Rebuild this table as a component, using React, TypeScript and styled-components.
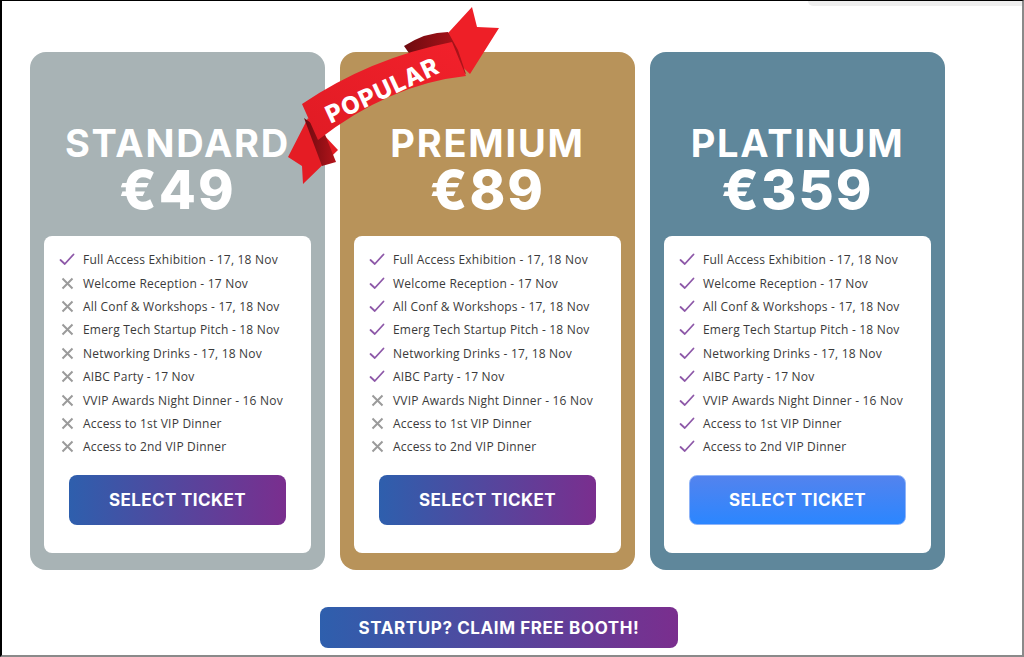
import styled, { createGlobalStyle } from "styled-components";

const GlobalStyle = createGlobalStyle`
  html, body {
    margin: 0;
    padding: 0;
    background: #ffffff;
  }
  * {
    box-sizing: border-box;
  }
`;

const Frame = styled.div`
  position: relative;
  width: 1024px;
  height: 657px;
  overflow: hidden;
  border-top: 1px solid #000;
  border-left: 2px solid #000;
  border-right: 2px solid #8a8a8a;
  border-bottom: 2px solid #8a8a8a;
  background: #fff;
  font-family: "Inter", "Liberation Sans", sans-serif;
`;

const TopBar = styled.div`
  position: absolute;
  top: 0;
  right: 0;
  width: 214px;
  height: 5px;
  background: #eeeeee;
  border-bottom-left-radius: 5px;
`;

const Page = styled.div`
  width: 996px;
  display: flex;
  flex-direction: column;
  align-items: center;
  padding-top: 51px;
`;

const CardsRow = styled.div`
  display: flex;
  gap: 15px;
  align-self: flex-start;
  padding-left: 28px;
`;

const Card = styled.div<{ $bg: string }>`
  position: relative;
  width: 295px;
  height: 518px;
  border-radius: 16px;
  background: ${(p) => p.$bg};
  padding: 70px 14px 17px;
  display: flex;
  flex-direction: column;
  align-items: center;
`;

const Title = styled.h2`
  margin: 0;
  color: #fff;
  font-size: 38px;
  line-height: 42px;
  font-weight: 700;
  letter-spacing: 1.8px;
`;

const Price = styled.div`
  color: #fff;
  font-size: 54px;
  line-height: 46px;
  font-weight: 800;
  letter-spacing: 2px;
  margin-top: 3px;
`;

const Features = styled.div`
  margin-top: 23px;
  width: 100%;
  flex: 1;
  background: #fff;
  border-radius: 8px;
  padding: 12px 0 28px 15px;
  display: flex;
  flex-direction: column;
`;

const FeatureList = styled.ul`
  list-style: none;
  margin: 0;
  padding: 0;
`;

const Feature = styled.li`
  height: 23.4px;
  display: flex;
  align-items: center;
  gap: 8px;
  font-family: "Open Sans", "Liberation Sans", sans-serif;
  font-size: 12px;
  letter-spacing: 0.2px;
  color: #3a3a3a;
`;

const IconBox = styled.span`
  width: 16px;
  display: flex;
  justify-content: center;
`;

const TicketButton = styled.button<{ $variant?: "blue" }>`
  margin: 16px 0 0 10px;
  width: 217px;
  height: 50px;
  border-radius: 8px;
  border: ${(p) => (p.$variant === "blue" ? "1px solid #8fb4f8" : "none")};
  background: ${(p) =>
    p.$variant === "blue"
      ? "linear-gradient(180deg, #5383ee 0%, #2b86ff 100%)"
      : "linear-gradient(90deg, #2e5fad 0%, #7a2e8e 100%)"};
  color: #fff;
  font-family: "Inter", "Liberation Sans", sans-serif;
  font-size: 17px;
  font-weight: 700;
  letter-spacing: 0.4px;
  cursor: pointer;
`;

const BoothButton = styled.button`
  margin-top: 37px;
  margin-left: -2px;
  width: 358px;
  height: 41px;
  border: none;
  border-radius: 8px;
  background: linear-gradient(90deg, #2e5fad 0%, #7a2e8e 100%);
  color: #fff;
  font-family: "Inter", "Liberation Sans", sans-serif;
  font-size: 17px;
  font-weight: 700;
  letter-spacing: 0.6px;
  cursor: pointer;
`;

const RibbonSvg = styled.svg`
  position: absolute;
  left: -60px;
  top: -52px;
  overflow: visible;
  pointer-events: none;
`;

const Check = () => (
  <svg width="16" height="13" viewBox="0 0 16 13">
    <path d="M1.5 7 L5.8 11 L14.5 1.5" fill="none" stroke="#8d58a8" strokeWidth="1.8" strokeLinecap="round" strokeLinejoin="round" />
  </svg>
);

const Cross = () => (
  <svg width="13" height="13" viewBox="0 0 13 13">
    <path d="M1.5 1.5 L11.5 11.5 M11.5 1.5 L1.5 11.5" fill="none" stroke="#9b9b9b" strokeWidth="2" />
  </svg>
);

// red "POPULAR" ribbon hanging over the premium card corner
const Ribbon = () => (
  <RibbonSvg width="220" height="200" viewBox="0 0 220 200">
    <defs>
      <linearGradient id="rb" x1="0" y1="1" x2="1" y2="0">
        <stop offset="0" stopColor="#e01b24" />
        <stop offset="1" stopColor="#f2212b" />
      </linearGradient>
      <linearGradient id="fold" x1="0" y1="0" x2="1" y2="0">
        <stop offset="0" stopColor="#6e0a0f" />
        <stop offset="1" stopColor="#b3141b" />
      </linearGradient>
    </defs>
    {/* right tail */}
    <path d="M158 44 L192 7 L197 27 L219 28 L190 74 Z" fill="#ee1f27" />
    {/* right fold */}
    <path d="M124 46 Q146 32 168 32 L178 50 L186 74 Q160 60 138 66 Z" fill="url(#fold)" />
    {/* left tail */}
    <path d="M8 157 L28 118 L58 150 L23 184 L22 166 Z" fill="#e51c24" />
    {/* left fold */}
    <path d="M24 118 L44 132 L56 162 L42 166 Z" fill="url(#fold)" />
    {/* main band */}
    <path d="M22 104 Q90 58 172 42 L186 76 Q110 84 38 140 Z" fill="url(#rb)" />
    <text
      x="106"
      y="98"
      transform="rotate(-25 106 98)"
      textAnchor="middle"
      fill="#fff"
      fontFamily="Inter, 'Liberation Sans', sans-serif"
      fontWeight="800"
      fontSize="24"
      letterSpacing="1"
    >
      POPULAR
    </text>
  </RibbonSvg>
);

const features = [
  "Full Access Exhibition - 17, 18 Nov",
  "Welcome Reception - 17 Nov",
  "All Conf & Workshops - 17, 18 Nov",
  "Emerg Tech Startup Pitch - 18 Nov",
  "Networking Drinks - 17, 18 Nov",
  "AIBC Party - 17 Nov",
  "VVIP Awards Night Dinner - 16 Nov",
  "Access to 1st VIP Dinner",
  "Access to 2nd VIP Dinner",
];

const plans = [
  { name: "STANDARD", price: "€49", bg: "#a8b3b5", included: 1 },
  { name: "PREMIUM", price: "€89", bg: "#b8935a", included: 6, popular: true },
  { name: "PLATINUM", price: "€359", bg: "#5f879b", included: 9, blue: true },
];

export default function App() {
  return (
    <Frame>
      <GlobalStyle />
      <TopBar />
      <Page>
        <CardsRow>
          {plans.map((plan) => (
            <Card key={plan.name} $bg={plan.bg}>
              {plan.popular && <Ribbon />}
              <Title>{plan.name}</Title>
              <Price>{plan.price}</Price>
              <Features>
                <FeatureList>
                  {features.map((f, i) => (
                    <Feature key={f}>
                      <IconBox>{i < plan.included ? <Check /> : <Cross />}</IconBox>
                      {f}
                    </Feature>
                  ))}
                </FeatureList>
                <TicketButton $variant={plan.blue ? "blue" : undefined}>SELECT TICKET</TicketButton>
              </Features>
            </Card>
          ))}
        </CardsRow>
        <BoothButton>STARTUP? CLAIM FREE BOOTH!</BoothButton>
      </Page>
    </Frame>
  );
}
